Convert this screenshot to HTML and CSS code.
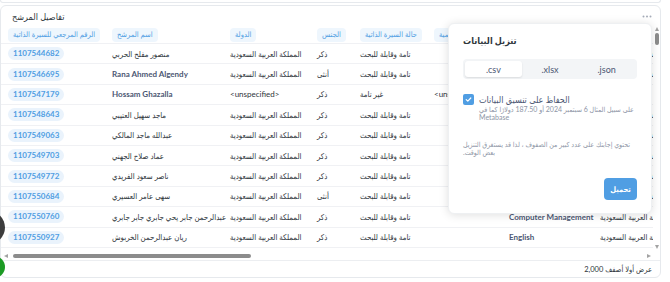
FILE: index.html
```html
<!DOCTYPE html>
<html lang="ar">
<head>
  <meta charset="UTF-8" />
  <title>تفاصيل المرشح</title>
  <link rel="stylesheet" href="styles.css">
</head>
<body>

<div class="prev-card"></div>

<div class="card">
  <div class="card-head">
    <h2 class="card-title">تفاصيل المرشح</h2>
    <svg class="more" width="10" height="3" viewBox="0 0 10 3"><circle cx="1.5" cy="1.5" r="1"/><circle cx="5" cy="1.5" r="1"/><circle cx="8.5" cy="1.5" r="1"/></svg>
  </div>

  <div class="grid-wrap">
    <div class="grid-main">
      <div class="grid-view">
        <div class="row head">
          <div class="cell"><span class="th">الرقم المرجعي للسيرة الذاتية</span></div>
          <div class="cell"><span class="th">اسم المرشح</span></div>
          <div class="cell"><span class="th">الدولة</span></div>
          <div class="cell"><span class="th">الجنس</span></div>
          <div class="cell"><span class="th">حالة السيرة الذاتية</span></div>
          <div class="cell"><span class="th">الدرجة العلمية</span></div>
          <div class="cell"><span class="th">التخصص</span></div>
          <div class="cell"><span class="th">الجنسية</span></div>
        </div>
        <div class="row">
          <div class="cell"><span class="ref">1107544682</span></div>
          <div class="cell">منصور مفلح الحربي</div>
          <div class="cell">المملكة العربية السعودية</div>
          <div class="cell">ذكر</div>
          <div class="cell">تامة وقابلة للبحث</div>
          <div class="cell"></div>
          <div class="cell lat">Business</div>
          <div class="cell">المملكة العربية السعودية</div>
        </div>
        <div class="row">
          <div class="cell"><span class="ref">1107546695</span></div>
          <div class="cell lat">Rana Ahmed Algendy</div>
          <div class="cell">المملكة العربية السعودية</div>
          <div class="cell">أنثى</div>
          <div class="cell">تامة وقابلة للبحث</div>
          <div class="cell"></div>
          <div class="cell lat">Marketing</div>
          <div class="cell">المملكة العربية السعودية</div>
        </div>
        <div class="row">
          <div class="cell"><span class="ref">1107547179</span></div>
          <div class="cell lat">Hossam Ghazalla</div>
          <div class="cell unspec">&lt;unspecified&gt;</div>
          <div class="cell">ذكر</div>
          <div class="cell">غير تامة</div>
          <div class="cell unspec">&lt;unspecified&gt;</div>
          <div class="cell unspec">&lt;unspecified&gt;</div>
          <div class="cell unspec">&lt;unspecified&gt;</div>
        </div>
        <div class="row">
          <div class="cell"><span class="ref">1107548643</span></div>
          <div class="cell">ماجد سهيل العتيبي</div>
          <div class="cell">المملكة العربية السعودية</div>
          <div class="cell">ذكر</div>
          <div class="cell">تامة وقابلة للبحث</div>
          <div class="cell"></div>
          <div class="cell lat">Accounting</div>
          <div class="cell">المملكة العربية السعودية</div>
        </div>
        <div class="row">
          <div class="cell"><span class="ref">1107549063</span></div>
          <div class="cell">عبدالله ماجد المالكي</div>
          <div class="cell">المملكة العربية السعودية</div>
          <div class="cell">ذكر</div>
          <div class="cell">تامة وقابلة للبحث</div>
          <div class="cell"></div>
          <div class="cell lat">Law</div>
          <div class="cell">المملكة العربية السعودية</div>
        </div>
        <div class="row">
          <div class="cell"><span class="ref">1107549703</span></div>
          <div class="cell">عماد صلاح الجهني</div>
          <div class="cell">المملكة العربية السعودية</div>
          <div class="cell">ذكر</div>
          <div class="cell">تامة وقابلة للبحث</div>
          <div class="cell"></div>
          <div class="cell lat">Engineering</div>
          <div class="cell">المملكة العربية السعودية</div>
        </div>
        <div class="row">
          <div class="cell"><span class="ref">1107549772</span></div>
          <div class="cell">ناصر سعود الفريدي</div>
          <div class="cell">المملكة العربية السعودية</div>
          <div class="cell">ذكر</div>
          <div class="cell">تامة وقابلة للبحث</div>
          <div class="cell"></div>
          <div class="cell lat">Finance</div>
          <div class="cell">المملكة العربية السعودية</div>
        </div>
        <div class="row">
          <div class="cell"><span class="ref">1107550684</span></div>
          <div class="cell">سهى عامر العسيري</div>
          <div class="cell">المملكة العربية السعودية</div>
          <div class="cell">أنثى</div>
          <div class="cell">تامة وقابلة للبحث</div>
          <div class="cell"></div>
          <div class="cell lat">Education</div>
          <div class="cell">المملكة العربية السعودية</div>
        </div>
        <div class="row">
          <div class="cell"><span class="ref">1107550760</span></div>
          <div class="cell">عبدالرحمن جابر يحي جابري جابر جابري</div>
          <div class="cell">المملكة العربية السعودية</div>
          <div class="cell">ذكر</div>
          <div class="cell">تامة وقابلة للبحث</div>
          <div class="cell"></div>
          <div class="cell lat">Computer Management</div>
          <div class="cell">المملكة العربية السعودية</div>
        </div>
        <div class="row">
          <div class="cell"><span class="ref">1107550927</span></div>
          <div class="cell">ريان عبدالرحمن الخربوش</div>
          <div class="cell">المملكة العربية السعودية</div>
          <div class="cell">ذكر</div>
          <div class="cell">تامة وقابلة للبحث</div>
          <div class="cell"></div>
          <div class="cell lat">English</div>
          <div class="cell">المملكة العربية السعودية</div>
        </div>
        <div class="row">
          <div class="cell"><span class="ref">1107551034</span></div>
          <div class="cell">فهد محمد القحطاني</div>
          <div class="cell">المملكة العربية السعودية</div>
          <div class="cell">ذكر</div>
          <div class="cell">تامة وقابلة للبحث</div>
          <div class="cell"></div>
          <div class="cell"></div>
          <div class="cell">المملكة العربية السعودية</div>
        </div>
      </div>
      <div class="vscroll">
        <span class="arrow up"></span>
        <span class="vthumb"></span>
        <span class="vtrack"></span>
        <span class="arrow down"></span>
      </div>
    </div>
    <div class="hscroll">
      <span class="arrow left"></span>
      <span class="hthumb"></span>
      <span class="htrack"></span>
      <span class="arrow right"></span>
    </div>
  </div>

  <div class="card-foot">عرض أولا أصفف 2,000</div>
</div>

<div class="export">
  <h3 class="export-title">تنزيل البيانات</h3>
  <div class="formats">
    <div class="fmt active">.csv</div>
    <div class="fmt">.xlsx</div>
    <div class="fmt">.json</div>
  </div>
  <div class="keep">
    <span class="check">
      <svg width="11" height="11" viewBox="0 0 11 11"><polyline points="3.2,5.6 4.8,7.1 7.8,4" fill="none" stroke="#fff" stroke-width="1.2" stroke-linecap="round" stroke-linejoin="round"/></svg>
    </span>
    <div>
      <div class="keep-label">الحفاظ على تنسيق البيانات</div>
      <div class="keep-note" dir="rtl">على سبيل المثال 6 سبتمبر 2024 أو 187.50 دولارًا كما في Metabase</div>
    </div>
  </div>
  <p class="warn" dir="rtl">تحتوي إجابتك على عدد كبير من الصفوف ، لذا قد يستغرق التنزيل بعض الوقت.</p>
  <button class="btn">تحميل</button>
</div>

<div class="fab fab-dark"></div>
<div class="fab fab-green"></div>

</body>
</html>
```

FILE: styles.css
```css
* {
  box-sizing: border-box;
}
body {
  margin: 0;
  width: 670px;
  height: 282px;
  overflow: hidden;
  position: relative;
  background: #fff;
  color: #4c5773;
  font-family: Lato, "DejaVu Sans Condensed", "DejaVu Sans", sans-serif;
}
.prev-card {
  width: 661px;
  height: 3px;
  border: 1px solid #e6e9ed;
  border-top: none;
  border-radius: 0 0 5px 5px;
}
.card {
  margin-top: 2px;
  width: 661px;
  height: 273px;
  border: 1px solid #e6e9ed;
  border-radius: 6px;
  display: flex;
  flex-direction: column;
  overflow: hidden;
}
.card-head {
  height: 20px;
  flex: none;
  display: flex;
  align-items: center;
  justify-content: space-between;
  padding: 0 8px 0 11px;
}
.card-title {
  margin: 0;
  font-size: 9px;
  font-weight: 400;
  color: #2e353b;
}
.more {
  fill: #a5abb8;
}

/* table */
.grid-wrap {
  flex: none;
  border-bottom: 1px solid #eceef1;
}
.grid-main {
  display: flex;
  height: 225px;
}
.grid-view {
  flex: 1;
  overflow: hidden;
}
.row {
  display: grid;
  grid-template-columns: 104px 118px 87px 43px 74px 75px 91px 100px;
  height: 20.4px;
  align-items: center;
  border-bottom: 1px solid #f0f1f4;
  white-space: nowrap;
  font-size: 7.8px;
  color: #2e353b;
}
.row.head {
  height: 18px;
  font-size: 7.5px;
}
.cell {
  padding-left: 7px;
}
.cell.lat,
.cell.unspec {
  font-size: 8px;
  font-weight: 700;
  color: #4c5773;
}
.cell.unspec {
  font-weight: 400;
  color: #2e353b;
}
.th {
  display: inline-block;
  height: 14px;
  line-height: 14px;
  padding: 0 5px;
  border-radius: 4px;
  background: #eef6fd;
  color: #509ee3;
}
.ref {
  display: inline-block;
  height: 13px;
  line-height: 13px;
  padding: 0 5px;
  border-radius: 7px;
  background: #eaf3fc;
  color: #509ee3;
  font-size: 8px;
  font-weight: 700;
}

/* scrollbars */
.vscroll {
  width: 7px;
  flex: none;
  display: flex;
  flex-direction: column;
  align-items: center;
  padding: 1px 0 2px;
}
.vthumb {
  width: 4px;
  height: 12px;
  margin-top: 2px;
  border-radius: 2px;
  background: #8c8c8c;
}
.vtrack,
.htrack {
  flex: 1;
}
.hscroll {
  height: 9px;
  display: flex;
  align-items: center;
  padding: 0 9px 0 3px;
}
.hthumb {
  width: 238px;
  height: 4px;
  margin-left: 5px;
  border-radius: 2px;
  background: #8c8c8c;
}
.arrow {
  width: 0;
  height: 0;
  border: 2.5px solid transparent;
}
.arrow.up {
  border-bottom: 4px solid #a3a3a3;
  border-top: none;
}
.arrow.down {
  border-top: 4px solid #a3a3a3;
  border-bottom: none;
}
.arrow.left {
  border-right: 4px solid #a3a3a3;
  border-left: none;
}
.arrow.right {
  border-left: 4px solid #a3a3a3;
  border-right: none;
}

.card-foot {
  flex: 1;
  display: flex;
  align-items: center;
  justify-content: flex-end;
  padding-right: 8px;
  font-size: 7.5px;
  color: #2e353b;
}

/* export popover */
.export {
  position: absolute;
  left: 448px;
  top: 23px;
  width: 204px;
  height: 191px;
  padding: 11px 14px 13px;
  background: #fff;
  border: 1px solid #eef0f2;
  border-radius: 6px;
  box-shadow: 0 1px 10px rgba(0, 0, 0, 0.13);
  display: flex;
  flex-direction: column;
}
.export-title {
  margin: 0;
  font-size: 9px;
  line-height: 12px;
  font-weight: 700;
  color: #2e353b;
}
.formats {
  margin-top: 12px;
  height: 20px;
  padding: 2px;
  display: grid;
  grid-template-columns: repeat(3, 1fr);
  background: #f3f5f7;
  border-radius: 4px;
}
.fmt {
  display: flex;
  align-items: center;
  justify-content: center;
  font-size: 9px;
}
.fmt.active {
  background: #fff;
  border-radius: 3px;
  box-shadow: 0 1px 2px rgba(0, 0, 0, 0.1);
}
.keep {
  margin-top: 15px;
  display: flex;
  gap: 5px;
}
.check {
  flex: none;
  width: 11px;
  height: 11px;
  border-radius: 2px;
  background: #509ee3;
  display: flex;
}
.keep-label {
  font-size: 9px;
  line-height: 11px;
}
.keep-note {
  margin-top: 1px;
  font-size: 7px;
  line-height: 7.5px;
  color: #8e95a6;
  text-align: left;
}
.warn {
  margin: 19px 0 0;
  font-size: 7px;
  line-height: 8px;
  color: #8e95a6;
  text-align: left;
}
.btn {
  margin-top: auto;
  align-self: flex-end;
  width: 33px;
  height: 22px;
  padding: 0;
  border: none;
  border-radius: 4px;
  background: #509ee3;
  color: #fff;
  font-family: inherit;
  font-size: 7.5px;
  font-weight: 700;
}

/* floating buttons at the page edge */
.fab {
  position: absolute;
  border-radius: 50%;
}
.fab-dark {
  left: -28px;
  top: 211px;
  width: 33px;
  height: 33px;
  background: #3d3d3d;
}
.fab-green {
  left: -17px;
  top: 256px;
  width: 22px;
  height: 22px;
  background: #1c9a24;
}
```
